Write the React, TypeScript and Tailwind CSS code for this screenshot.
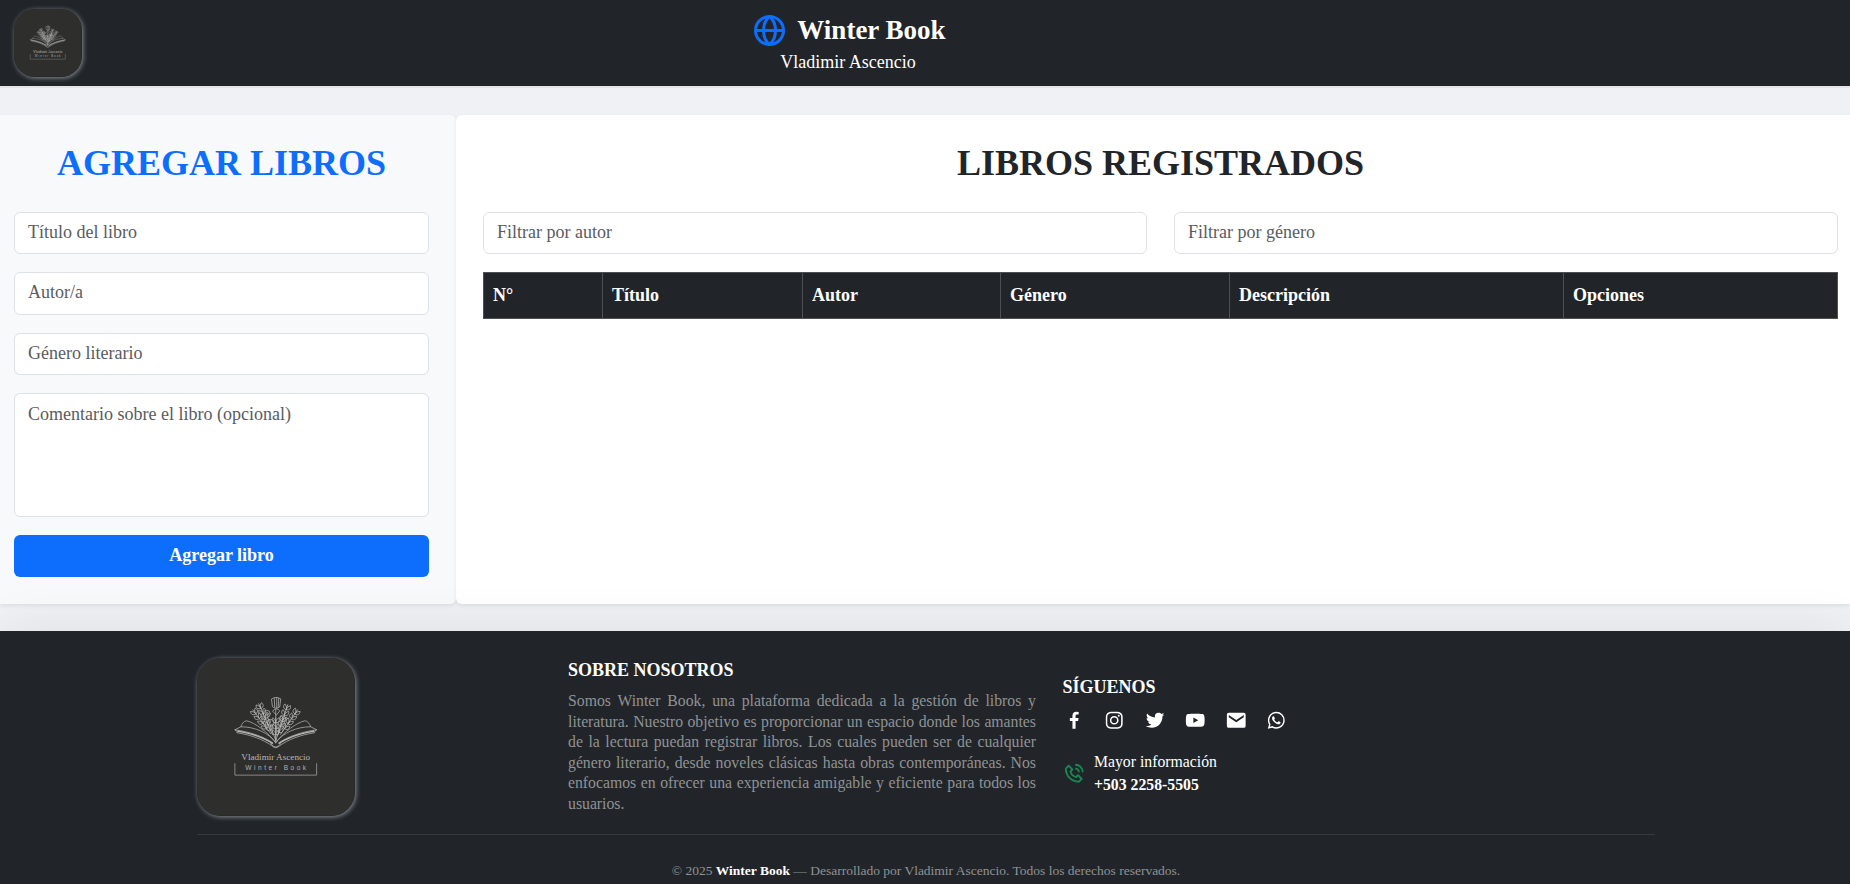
import React from "react";
import {
  BiLogoFacebook, BiLogoInstagram, BiLogoTwitter, BiLogoYoutube, BiSolidEnvelope, BiLogoWhatsapp, BiPhoneCall,
} from "react-icons/bi";

const strokes = { fill: "none", stroke: "currentColor", strokeLinecap: "round" as const, strokeLinejoin: "round" as const };

const sprigs = [
  { x: 56, y: 52, turn: -37, length: 30, count: 4 },
  { x: 62, y: 46, turn: -24, length: 34, count: 5 },
  { x: 91, y: 47, turn: 18, length: 32, count: 5 },
  { x: 101, y: 52, turn: 35, length: 30, count: 4 },
  { x: 79, y: 60, turn: 0, length: 22, count: 3 },
];

function Sprig({ x, y, turn, length, count }: { x: number; y: number; turn: number; length: number; count: number }) {
  return (
    <g transform={`translate(${x} ${y}) rotate(${turn})`}>
      <path d={`M0 0v${length}`} />
      {Array.from({ length: count }, (_, i) => (
        <path key={i} d={`M0 ${i * 6 + 5}c-4 0-4-3-3-5c2 1 3 3 3 5c4 0 4-3 3-5c-2 1-3 3-3 5`} />
      ))}
    </g>
  );
}

function Logo({ className }: { className: string }) {
  return (
    <svg viewBox="0 0 158 158" className={className}>
      <rect width="158" height="158" fill="#2e2e2c" />
      <g {...strokes} strokeWidth="0.75" className="text-[#b5b5b3]">
        <path d="M79 85C71 74 58 65 50 63c-3 0-5 3-6 6c14 0 28 6 35 16c7-10 21-16 35-16c-1-3-3-6-6-6c-8 2-21 11-29 22z" />
        <path d="M44 69l-6 3c2 1 2 2 2 3c14 2 27 7 35 13q4 4 8 0c8-6 21-11 35-13c0-1 0-2 2-3l-6-3" />
        <path d="M38 72c15 2 29 7 38 13M120 72c-15 2-29 7-38 13" />
        <path d="M41 73.5c14 2 27 7 35 12.5M117 73.5c-14 2-27 7-35 12.5" strokeWidth="1.4" strokeDasharray="1.2 .9" />
        <path d="M74 86q5 7 10 0M79 84V52M79 83L71 60M79 83L86 62" />
        <path d="M75 41q4-3 9 0l-1 8q-4 3-7 0zM77.5 40.500l.5 9M80 40v10M82 40.500l-.5 9M76 53q4-4 7 0l-3 4z" />
        <circle cx="70" cy="56" r="3.5" /><circle cx="70" cy="56" r="1.5" />
        <circle cx="74" cy="65" r="3.5" /><circle cx="86" cy="61" r="3" /><circle cx="86" cy="61" r="1" />
        {sprigs.map((sprig) => <Sprig key={sprig.x} {...sprig} />)}
      </g>
      <text x="79" y="102.5" textAnchor="middle" textLength="69" lengthAdjust="spacingAndGlyphs" fontSize="9" fill="#b9b9b7" fontFamily="Liberation Serif, serif">Vladimir Ascencio</text>
      <text x="79" y="112.6" textAnchor="middle" textLength="61" fontSize="6.6" fill="#b0b0ae" fontFamily="Liberation Sans, sans-serif">Winter Book</text>
      <path d="M38 106v11.5h82V106" {...strokes} stroke="#888886" strokeWidth="1" />
    </svg>
  );
}

function GlobeIcon() {
  return (
    <svg viewBox="0 0 31 31" className="size-[31px] text-[#0d6efd]" fill="none" stroke="currentColor" strokeWidth="3">
      <circle cx="15.5" cy="15.5" r="14" />
      <path d="M15.5 1.5C7.500 8 7.500 23 15.5 29.5C23.500 23 23.500 8 15.5 1.5z" />
      <path d="M2 15.5h27" />
    </svg>
  );
}

const field = "block w-full rounded-md border border-[#dee2e6] bg-white px-[13px] text-[18px] leading-[27px] text-[#212529] placeholder:text-[#595c5f]";
const columns = ["N°", "Título", "Autor", "Género", "Descripción", "Opciones"];
const socials = [BiLogoFacebook, BiLogoInstagram, BiLogoTwitter, BiLogoYoutube, BiSolidEnvelope, BiLogoWhatsapp];

export default function App() {
  return (
    <div className="h-[884px] overflow-hidden bg-[#f0f1f5] font-['Liberation_Serif',serif] text-[18px] leading-[27px] text-[#212529]">
      <header className="flex h-[86px] items-start bg-[#212529] pt-[9px] pl-[14px] text-white shadow-[0_2px_0_#e5e5e6]">
        <Logo className="size-[67.5px] rounded-[21px] shadow-[1px_1px_5px_#8a9096]" />
        <div className="ml-[672.5px] flex w-[192px] flex-col items-center">
          <div className="mt-[5px] flex h-[33px] items-center gap-[12px]">
            <GlobeIcon />
            <span className="text-[27px] leading-[33px] font-bold whitespace-nowrap">Winter Book</span>
          </div>
          <span className="mt-[2px] pr-[4px]">Vladimir Ascencio</span>
        </div>
      </header>

      <main className="mt-[29px] flex h-[489px]">
        <section className="w-[456px] rounded-r-md bg-[#f8f9fb] pt-[27px] pr-[27px] pl-[14px] shadow-[0_2px_4px_rgba(0,0,0,0.075)]">
          <h1 className="text-center text-[36px] leading-[43px] font-bold text-[#0d6efd]">AGREGAR LIBROS</h1>
          <form className="mt-[27px] flex flex-col gap-[18px]">
            <input className={`${field} h-[42px] pb-px`} placeholder="Título del libro" />
            <input className={`${field} h-[43px] pb-[2px]`} placeholder="Autor/a" />
            <input className={`${field} h-[42px] pb-px`} placeholder="Género literario" />
            <textarea className={`${field} h-[124px] resize-none py-[7px]`} placeholder="Comentario sobre el libro (opcional)" />
            <button type="button" className="h-[42px] rounded-md bg-[#0d6efd] pb-px font-bold text-white">Agregar libro</button>
          </form>
        </section>
        <section className="flex-1 rounded-l-md bg-white pt-[27px] pr-[12px] pl-[27px] shadow-[0_2px_4px_rgba(0,0,0,0.075)]">
          <h1 className="text-center text-[36px] leading-[43px] font-bold">LIBROS REGISTRADOS</h1>
          <div className="mt-[27px] grid grid-cols-2 gap-[27px]">
            <input className={`${field} h-[42px] pb-px`} placeholder="Filtrar por autor" />
            <input className={`${field} h-[42px] pb-px`} placeholder="Filtrar por género" />
          </div>
          <div className="mt-[18px] grid h-[47px] grid-cols-[119px_200px_198px_229px_334px_1fr] border border-[#4d5154] bg-[#212529] font-bold text-white">
            {columns.map((name) => (
              <div key={name} className="flex items-center border-r border-[#4d5154] pl-[9px] last:border-r-0">{name}</div>
            ))}
          </div>
        </section>
      </main>

      <footer className="relative mt-[27px] h-[253px] bg-[#212529] pt-[27px] pr-[195px] pl-[197px] text-white shadow-[0_0_50px_rgba(0,0,0,0.08)]">
        <div className="flex h-[177px] border-b border-[#373b3e]">
          <Logo className="size-[157.5px] shrink-0 rounded-[24px] shadow-[1px_1px_5px_#8a9096]" />
          <div className="-mt-px ml-[213.5px] w-[468px]">
            <h2 className="font-bold">SOBRE NOSOTROS</h2>
            <p className="mt-[7px] text-justify text-[15.75px] leading-[20.5px] text-[#909294]">
              Somos Winter Book, una plataforma dedicada a la gestión de libros y literatura. Nuestro objetivo es proporcionar un espacio donde los amantes de la lectura puedan registrar libros. Los cuales pueden ser de cualquier género literario, desde noveles clásicas hasta obras contemporáneas. Nos enfocamos en ofrecer una experiencia amigable y eficiente para todos los usuarios.
            </p>
          </div>
          <div className="ml-[26.5px] pt-[16px]">
            <h2 className="font-bold">SÍGUENOS</h2>
            <div className="mt-[8px] flex gap-[18px]">
              {socials.map((Icon, i) => <Icon key={i} className="size-[22.5px]" />)}
            </div>
            <div className="mt-[18px] flex items-center gap-[9px]">
              <BiPhoneCall className="size-[22.5px] text-[#198754]" />
              <div className="text-[15.75px] leading-[23.6px]">
                <p>Mayor información</p>
                <p className="font-bold">+503 2258-5505</p>
              </div>
            </div>
          </div>
        </div>
        <p className="mt-[26px] text-center text-[13.5px] leading-[20px] text-[#909294]">
          © 2025 <b className="text-white">Winter Book</b> — Desarrollado por Vladimir Ascencio. Todos los derechos reservados.
        </p>
      </footer>
    </div>
  );
}
